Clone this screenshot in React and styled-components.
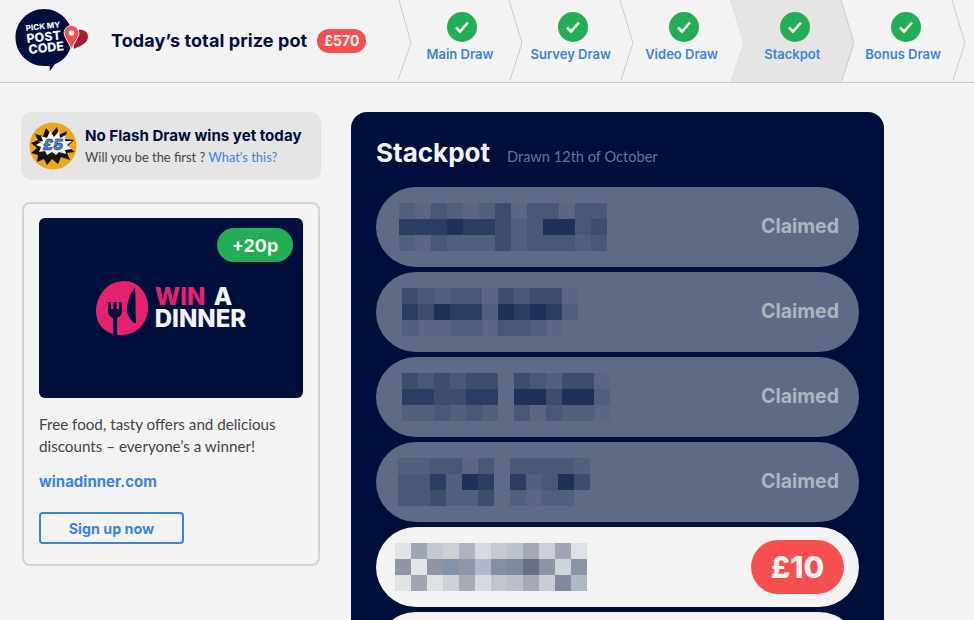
import { createGlobalStyle } from "styled-components";
import styled from "styled-components";

const CLAIMED_SHADES = {
    0: "transparent",
    1: "#5a6682",
    2: "#52607c",
    3: "#4a5876",
    4: "#3f4d6d",
    5: "#2c3d63",
    6: "#1f3159",
};

const claimedRows = [
    { x: 23, lines: ["2132124133133", "5556554236634", "2132224233323"] },
    { x: 26, lines: ["43233143441", "54655265652", "21122133210"] },
    { x: 26, lines: ["4343440432441", "5544550664662", "2232320313221"] },
    { x: 22, lines: ["223313033332", "335265052364", "334224021220"] },
];

const winnerPixels = [
    "e2e3e6 a0a6b3 c2c9d3 cfd0d6 b0b3bf d6d9e2 c7c9d1 bcc3cc a5a9b6 cbcfd8 a0a6b6 dde0e4",
    "9095a6 e3e5e9 9095a5 8592a8 9196a7 b3b9c7 8490a2 7f8aa0 667087 8f94a6 cdd5db 8a95a8",
    "e2e3e5 a0a6b4 e0e1e5 cdd1da a8aab6 d6dae3 c3c5ce bac0cb a5a9b6 c9cdd5 828a9b aeb8c6",
];

const steps = ["Main Draw", "Survey Draw", "Video Draw", "Stackpot", "Bonus Draw"];

function Logo() {
    return (
        <LogoSvg viewBox="0 0 76 72" width="76" height="72">
            <path d="M60 27c4-4 14-3 14 5 0 6-8 9-14 12Z" fill="#a81f2b" />
            <path d="M30 4C14 4 1.500 17 1.500 32.500S14 61 30 61h5.500l.5 5 5-7C51 56 58.500 45 58.500 32.500 58.500 17 46 4 30 4Z" fill="#000e3c" />
            <path d="M57.500 20.500c4 0 7.300 3.300 7.300 7.300 0 5-4.500 9-7.300 16.500-2.800-7.500-7.300-11.500-7.300-16.500 0-4 3.300-7.300 7.300-7.300Z" fill="#f64f50" stroke="#f3f3f3" strokeWidth="1" />
            <circle cx="57.500" cy="28" r="2.800" fill="#f3f3f3" />
            <LogoText x="12" y="26" $size={8} transform="rotate(-6 12 26)">PICK MY</LogoText>
            <LogoText x="13" y="38" $size={12.5} transform="rotate(-6 13 38)">POST</LogoText>
            <LogoText x="15" y="49" $size={12.5} transform="rotate(-6 15 49)">CODE</LogoText>
        </LogoSvg>
    );
}

function Check() {
    return (
        <svg viewBox="0 0 30 30" width="30" height="30">
            <circle cx="15" cy="15" r="15" fill="#22ad56" />
            <path d="M9 15.500l4 4 8-9" fill="none" stroke="#f6f6ee" strokeWidth="2.600" />
        </svg>
    );
}

function Burst() {
    return (
        <svg viewBox="0 0 48 48" width="48" height="48">
            <circle cx="24" cy="24" r="23.500" fill="#eaa71f" />
            <path d="M2 21l7-3-3-6 8 2 3-8 5 6 6-7 2 8 8-4-2 8 9 1-6 6 7 6-8 1 3 7-9-3-3 7-6-5-5 6-3-6-7 3 1-7-7-2 6-5Z" fill="#141414" />
            <path d="M8 20l6-1-2-5 6 2 3-7 4 6 5-6 1 7 6-3-1 6 7 0-5 4 5 4-7 1 1 4-7-2-3 3-4-3-5 3-2-4-6 1 2-5-5-2 5-3Z" fill="#f7f7f7" />
            <BurstText x="24" y="28" textAnchor="middle">£5</BurstText>
        </svg>
    );
}

function DinnerMark() {
    return (
        <svg viewBox="0 0 52 54" width="52" height="54">
            <path d="M28 0C42 0 52 12 52 26c0 16-11 28-27 28C10 54 0 44 0 30 0 14 12 0 28 0Z" fill="#e5226f" />
            <path d="M12 21h3v7h2.500v-7h3v7h2.500v-7h3v10c0 3-2.500 5-5 6v17h-4V37c-2.500-1-5-3-5-6Z" fill="#000e3c" />
            <path d="M39 7c-5 5-8 15-8 22 0 6 4 10 7 13h2c-1-12 0-24-1-35Z" fill="#000e3c" />
        </svg>
    );
}

function Pixelated({ x, lines }) {
    return (
        <PixelGrid $x={x} $cols={lines[0].length}>
            {lines.join("").split("").map((s, i) => (
                <Pixel key={i} $c={CLAIMED_SHADES[s]} />
            ))}
        </PixelGrid>
    );
}

export default function App() {
    return (
        <>
            <GlobalStyle />
            <Header>
                <Brand>
                    <Logo />
                    <PotTitle>Today’s total prize pot</PotTitle>
                    <PotBadge>£570</PotBadge>
                </Brand>
                <Steps>
                    {steps.map((s, i) => (
                        <Step key={s}>
                            <StepEdge viewBox="0 0 124 82" width="124" height="82">
                                {s === "Stackpot" && <polygon points="1,0 111,0 124,43 112,82 0,82 13,43" fill="#e5e5e5" />}
                                {i === 0 && <polyline points="1,0 13,43 0,80" fill="none" stroke="#c9c9c9" />}
                                <polyline points="111,0 124,43 112,80" fill="none" stroke="#c9c9c9" />
                            </StepEdge>
                            <StepCheck><Check /></StepCheck>
                            <StepLabel>{s}</StepLabel>
                        </Step>
                    ))}
                </Steps>
            </Header>
            <Content>
                <Sidebar>
                    <FlashBox>
                        <Burst />
                        <FlashCopy>
                            <FlashTitle>No Flash Draw wins yet today</FlashTitle>
                            <FlashText>Will you be the first ? <FlashLink>What's this?</FlashLink></FlashText>
                        </FlashCopy>
                    </FlashBox>
                    <AdCard>
                        <AdImage>
                            <AdBadge>+20p</AdBadge>
                            <DinnerLogo>
                                <DinnerMark />
                                <DinnerWords>
                                    <DinnerWin>WIN <span>A</span></DinnerWin>
                                    <div>DINNER</div>
                                </DinnerWords>
                            </DinnerLogo>
                        </AdImage>
                        <AdText>Free food, tasty offers and delicious discounts – everyone’s a winner!</AdText>
                        <AdLink>winadinner.com</AdLink>
                        <SignUp>Sign up now</SignUp>
                    </AdCard>
                </Sidebar>
                <Panel>
                    <PanelHead>
                        <PanelTitle>Stackpot</PanelTitle>
                        <PanelDate>Drawn 12th of October</PanelDate>
                    </PanelHead>
                    <Rows>
                        {claimedRows.map((r, i) => (
                            <ClaimedRow key={i}>
                                <Pixelated x={r.x} lines={r.lines} />
                                <ClaimedText>Claimed</ClaimedText>
                            </ClaimedRow>
                        ))}
                        <WinnerRow>
                            <PixelGrid $x={19} $cols={12}>
                                {winnerPixels.join(" ").split(" ").map((c, i) => (
                                    <Pixel key={i} $c={"#" + c} />
                                ))}
                            </PixelGrid>
                            <Prize>£10</Prize>
                        </WinnerRow>
                        <WinnerRow />
                    </Rows>
                </Panel>
            </Content>
        </>
    );
}

const GlobalStyle = createGlobalStyle`
    html, body {
        margin: 0;
        height: 620px;
        overflow: hidden;
        background: #f3f3f3;
        font-family: "Lato", sans-serif;
    }
    * {
        box-sizing: border-box;
    }
`;

const Header = styled.header`
    height: 83px;
    border-bottom: 1px solid #c9c9c9;
    display: flex;
    overflow: hidden;
`;

const Brand = styled.div`
    width: 398px;
    display: flex;
    align-items: center;
    padding-left: 14px;
`;

const LogoSvg = styled.svg`
    flex: none;
`;

const LogoText = styled.text`
    font-family: "Inter", sans-serif;
    font-weight: 800;
    font-size: ${(p) => p.$size}px;
    fill: #f3f3f3;
`;

const PotTitle = styled.h1`
    margin: 0 0 2px 21px;
    font-family: "Inter", sans-serif;
    font-size: 18px;
    font-weight: 700;
    letter-spacing: 0.1px;
    color: #000e3c;
    white-space: nowrap;
`;

const PotBadge = styled.span`
    margin: 0 0 1px 10px;
    width: 49px;
    height: 24px;
    background: #f64f50;
    color: #f3f3f3;
    font-family: "Inter", sans-serif;
    font-weight: 700;
    font-size: 14px;
    border-radius: 12px;
    display: flex;
    align-items: center;
    justify-content: center;
`;

const Steps = styled.div`
    display: flex;
`;

const Step = styled.div`
    position: relative;
    width: 110.8px;
    flex: none;
    height: 82px;
`;

const StepEdge = styled.svg`
    position: absolute;
    left: 0;
    top: 0;
`;

const StepCheck = styled.div`
    position: relative;
    display: flex;
    justify-content: center;
    padding: 12px 0 0 18px;
    height: 42px;
`;

const StepLabel = styled.div`
    position: relative;
    margin-top: 4px;
    padding-left: 13px;
    text-align: center;
    font-family: "Inter", sans-serif;
    font-weight: 600;
    font-size: 13px;
    color: #3f83d8;
    white-space: nowrap;
`;

const Content = styled.main`
    display: flex;
    gap: 30px;
    padding: 29px 0 0 21px;
`;

const Sidebar = styled.aside`
    width: 300px;
    flex: none;
    display: flex;
    flex-direction: column;
    gap: 22px;
`;

const FlashBox = styled.div`
    height: 68px;
    background: #e5e5e5;
    border-radius: 10px;
    display: flex;
    align-items: center;
    gap: 8px;
    padding-left: 8px;
`;

const FlashCopy = styled.div`
    margin-bottom: 1px;
`;

const FlashTitle = styled.div`
    font-family: "Inter", sans-serif;
    font-weight: 700;
    font-size: 15.1px;
    color: #000e3c;
    margin-bottom: 4px;
`;

const FlashText = styled.div`
    font-size: 12.9px;
    color: #444;
`;

const FlashLink = styled.a`
    color: #3f83d8;
`;

const BurstText = styled.text`
    font-family: "Inter", sans-serif;
    font-weight: 900;
    font-style: italic;
    font-size: 15px;
    fill: #3f83d8;
    stroke: #111;
    stroke-width: 0.4;
`;

const AdCard = styled.section`
    margin: 0 1px;
    height: 364px;
    border: 2px solid #d2d2d2;
    border-radius: 8px;
    padding: 14px 15px;
`;

const AdImage = styled.div`
    position: relative;
    height: 180px;
    background: #000e3c;
    border-radius: 6px;
    display: flex;
    align-items: center;
    justify-content: center;
`;

const AdBadge = styled.span`
    position: absolute;
    top: 10px;
    right: 10px;
    width: 76px;
    height: 34px;
    border-radius: 17px;
    background: #22ad56;
    color: #f3f3f3;
    font-family: "Inter", sans-serif;
    font-weight: 700;
    font-size: 18px;
    display: flex;
    align-items: center;
    justify-content: center;
`;

const DinnerLogo = styled.div`
    display: flex;
    align-items: center;
    gap: 7px;
`;

const DinnerWords = styled.div`
    font-family: "Inter", sans-serif;
    font-weight: 800;
    font-size: 24px;
    line-height: 22px;
    color: #f3f3f3;
`;

const DinnerWin = styled.div`
    color: #e5226f;
    word-spacing: 3px;
    span {
        color: #f3f3f3;
    }
`;

const AdText = styled.p`
    margin: 15px 0 0;
    font-size: 15.2px;
    line-height: 22px;
    color: #444;
`;

const AdLink = styled.a`
    display: block;
    margin-top: 15px;
    font-family: "Inter", sans-serif;
    font-weight: 700;
    font-size: 15px;
    color: #3f83d8;
`;

const SignUp = styled.button`
    display: block;
    margin-top: 21px;
    width: 145px;
    height: 32px;
    background: none;
    border: 2px solid #3f83d8;
    border-radius: 4px;
    font-family: "Inter", sans-serif;
    font-weight: 700;
    font-size: 14.3px;
    color: #3f83d8;
`;

const Panel = styled.section`
    width: 533px;
    height: 508px;
    flex: none;
    overflow: hidden;
    background: #000e3c;
    border-radius: 16px 16px 0 0;
    padding: 0 25px;
`;

const PanelHead = styled.div`
    height: 75px;
    display: flex;
    align-items: baseline;
    gap: 17px;
    padding-top: 25px;
`;

const PanelTitle = styled.h2`
    margin: 0;
    font-family: "Inter", sans-serif;
    font-size: 26px;
    font-weight: 700;
    color: #f3f3f3;
`;

const PanelDate = styled.span`
    font-size: 14.6px;
    color: #6b7690;
`;

const Rows = styled.div`
    display: flex;
    flex-direction: column;
    gap: 5px;
`;

const ClaimedRow = styled.div`
    height: 80px;
    flex: none;
    border-radius: 40px;
    background: #5f6b85;
    display: flex;
    align-items: center;
    justify-content: space-between;
    padding-right: 20px;
`;

const WinnerRow = styled(ClaimedRow)`
    background: #f3f3f3;
    padding-right: 15px;
`;

const ClaimedText = styled.span`
    margin-bottom: 3px;
    font-family: "Inter", sans-serif;
    font-weight: 700;
    font-size: 19.5px;
    color: #aeb4c2;
`;

const PixelGrid = styled.div`
    display: grid;
    grid-template-columns: repeat(${(p) => p.$cols}, 16px);
    grid-auto-rows: 16px;
    margin-left: ${(p) => p.$x}px;
`;

const Pixel = styled.div`
    background: ${(p) => p.$c};
`;

const Prize = styled.span`
    width: 93px;
    height: 54px;
    border-radius: 27px;
    background: #f64f50;
    color: #f3f3f3;
    font-family: "Inter", sans-serif;
    font-weight: 800;
    font-size: 30px;
    display: flex;
    align-items: center;
    justify-content: center;
`;
